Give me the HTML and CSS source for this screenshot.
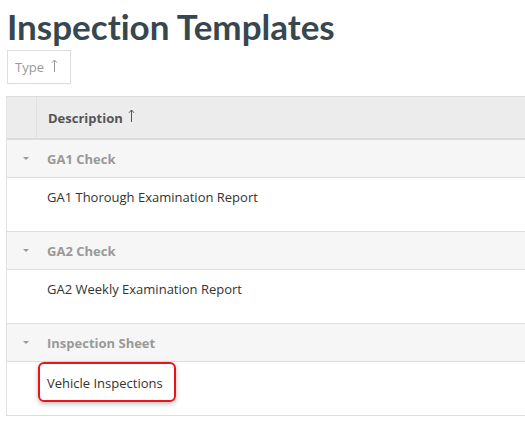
FILE: index.html
```html
<!DOCTYPE html>
<html>
<head>
<meta charset="utf-8">
<link rel="stylesheet" href="styles.css">
</head>
<body>
<h1 class="title">Inspection Templates</h1>
<div class="toolbar">
  <div class="sort-chip">Type <svg class="arrow-icon" width="7" height="13" viewBox="0 0 7 13"><path d="M3.5 1 V13 M1 3.8 L3.5 1 L6 3.8" fill="none" stroke="currentColor" stroke-width="1"/></svg></div>
</div>
<div class="grid">
  <div class="grid-header">
    <div class="expand-col"></div>
    <div class="head-cell">Description <svg class="arrow-icon" width="7" height="13" viewBox="0 0 7 13"><path d="M3.5 1 V13 M1 3.8 L3.5 1 L6 3.8" fill="none" stroke="currentColor" stroke-width="1"/></svg></div>
  </div>
  <div class="group-row"><span class="caret"></span><span class="group-label">GA1 Check</span></div>
  <div class="data-row"><span class="cell-text">GA1 Thorough Examination Report</span></div>
  <div class="group-row"><span class="caret"></span><span class="group-label">GA2 Check</span></div>
  <div class="data-row"><span class="cell-text">GA2 Weekly Examination Report</span></div>
  <div class="group-row"><span class="caret"></span><span class="group-label">Inspection Sheet</span></div>
  <div class="data-row"><span class="cell-text highlight">Vehicle Inspections</span></div>
</div>
</body>
</html>
```
FILE: styles.css
```css
html, body {
  margin: 0;
  padding: 0;
  background: #fff;
}
body {
  padding-left: 6px;
  font-family: "Open Sans", "Noto Sans", sans-serif;
  font-size: 13px;
  color: #333;
}
.title {
  margin: 0;
  padding-left: 1px;
  padding-top: 2px;
  font-family: Lato, sans-serif;
  font-weight: 700;
  font-size: 35px;
  line-height: 48px;
  font-variant-ligatures: none;
  color: #37474f;
}
.toolbar {
  padding-left: 1px;
  height: 46px;
}
.sort-chip {
  display: inline-flex;
  align-items: center;
  box-sizing: border-box;
  height: 34px;
  width: 64px;
  padding-left: 7px;
  border: 1px solid #ddd;
  color: #999;
  font-size: 13px;
}
.arrow-icon {
  margin-left: 7px;
  position: relative;
  top: -2px;
}
.grid {
  border-left: 1px solid #e3e3e3;
  border-top: 1px solid #dcdcdc;
}
.grid-header {
  display: flex;
  height: 41px;
  background: #ececec;
  border-bottom: 2px solid #d8dde0;
}
.expand-col {
  width: 29px;
  border-right: 1px solid #e0e0e0;
}
.head-cell {
  display: flex;
  align-items: center;
  padding-left: 11px;
  font-weight: 700;
  color: #555;
}
.head-cell .arrow-icon {
  margin-left: 5px;
}
.group-row {
  display: flex;
  align-items: center;
  height: 37px;
  background: #f6f6f6;
  border-bottom: 1px solid #dedede;
}
.caret {
  width: 0;
  height: 0;
  margin-left: 16px;
  margin-right: 18px;
  border-left: 3px solid transparent;
  border-right: 3px solid transparent;
  border-top: 3px solid #999;
}
.group-label {
  font-weight: 700;
  color: #999;
}
.data-row {
  height: 54px;
  border-bottom: 1px solid #dedede;
  padding-left: 40px;
  box-sizing: border-box;
  padding-top: 10px;
}
.cell-text {
  display: inline-block;
  line-height: 18px;
  color: #333;
}
.highlight {
  margin-left: -9px;
  margin-top: -10px;
  padding: 10px 11px 8px 7px;
  border: 2px solid #e8141b;
  border-radius: 6px;
  box-shadow: 0 2px 5px rgba(0,0,0,0.25);
}
```
